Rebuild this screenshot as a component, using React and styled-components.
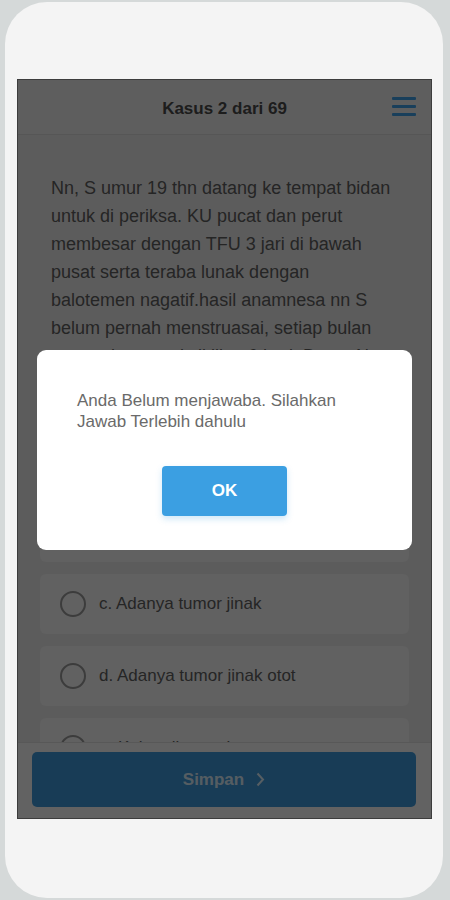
import React from 'react'
import styled, { createGlobalStyle } from 'styled-components'

const GlobalStyle = createGlobalStyle`
  html, body {
    margin: 0;
    padding: 0;
    background: #d5d9d9;
    font-family: "Liberation Sans", Arial, sans-serif;
  }
`;

const Page = styled.div`
  padding: 2px 7px 2px 5px;
`;

const Phone = styled.div`
  width: 438px;
  height: 896px;
  box-sizing: border-box;
  padding: 77px 11px 79px 12px;
  background: #f4f4f4;
  border-radius: 42px;
`;

const Screen = styled.div`
  position: relative;
  width: 415px;
  height: 740px;
  box-sizing: border-box;
  border: 1px solid #3c3c3c;
  background: #e7e7e7;
  display: flex;
  flex-direction: column;
  overflow: hidden;
`;

const Header = styled.div`
  height: 55px;
  flex-shrink: 0;
  box-sizing: border-box;
  padding-top: 4px;
  border-bottom: 1px solid #d6d6d6;
  background: #ececec;
  display: flex;
  align-items: center;
  justify-content: center;
  position: relative;

  h1 {
    margin: 0;
    font-size: 17px;
    font-weight: 700;
    color: #4a4a4a;
  }
`;

const MenuButton = styled.div`
  position: absolute;
  right: 15px;
  top: 17px;
  width: 24px;
  display: flex;
  flex-direction: column;
  gap: 5px;

  span {
    display: block;
    height: 3px;
    background: #3f9fe4;
    border-radius: 1px;
  }
`;

const Content = styled.div`
  flex: 1;
  overflow: hidden;
  padding: 39px 22px 0 22px;
`;

const Question = styled.p`
  margin: 0 0 32px 11px;
  width: 343px;
  font-size: 18px;
  line-height: 28px;
  color: #5c5c5c;
`;

const Options = styled.div`
  display: flex;
  flex-direction: column;
  gap: 12px;
`;

const OptionCard = styled.div`
  height: 60px;
  box-sizing: border-box;
  background: #f2f2f2;
  border-radius: 6px;
  display: flex;
  align-items: center;
  padding-left: 20px;
  gap: 13px;
  font-size: 17px;
  color: #5e5e5e;
`;

const Radio = styled.span`
  width: 26px;
  height: 26px;
  box-sizing: border-box;
  border: 2px solid #969696;
  border-radius: 50%;
  flex-shrink: 0;
`;

const Footer = styled.div`
  height: 76px;
  flex-shrink: 0;
  box-sizing: border-box;
  border-top: 1px solid #dcdcdc;
  background: #f6f6f6;
  padding: 9px 15px 0 14px;
`;

const SaveButton = styled.button`
  width: 100%;
  height: 55px;
  border: none;
  border-radius: 5px;
  background: #3d97d6;
  color: rgba(255, 255, 255, 0.8);
  font-family: "Liberation Sans", Arial, sans-serif;
  font-size: 17px;
  font-weight: 700;
  display: flex;
  align-items: center;
  justify-content: center;
  gap: 12px;
`;

const Backdrop = styled.div`
  position: absolute;
  inset: 0;
  background: rgba(0, 0, 0, 0.6);
  display: flex;
  align-items: center;
  justify-content: center;
`;

const Dialog = styled.div`
  width: 375px;
  height: 200px;
  box-sizing: border-box;
  background: #ffffff;
  border-radius: 9px;
  padding: 40px 40px 0 40px;
  display: flex;
  flex-direction: column;
  margin-top: 1px;

  p {
    margin: 0;
    font-size: 17px;
    line-height: 21px;
    color: #6a6a6a;
  }
`;

const OkButton = styled.button`
  align-self: center;
  margin-top: 34px;
  width: 125px;
  height: 50px;
  border: none;
  border-radius: 4px;
  background: #3b9fe2;
  box-shadow: 0 3px 6px rgba(59, 159, 226, 0.25);
  color: #ffffff;
  font-family: "Liberation Sans", Arial, sans-serif;
  font-size: 17px;
  font-weight: 700;
`;

const options = [
  'a. Hematokolpos',
  'b. Hematometra',
  'c. Adanya tumor jinak',
  'd. Adanya tumor jinak otot',
  'e. Kehamilan mola',
];

const App = () => {
  return (
    <Page>
      <GlobalStyle />
      <Phone>
        <Screen>
          <Header>
            <h1>Kasus 2 dari 69</h1>
            <MenuButton>
              <span />
              <span />
              <span />
            </MenuButton>
          </Header>

          <Content>
            <Question>
              Nn, S umur 19 thn datang ke tempat bidan untuk di periksa. KU pucat dan perut
              membesar dengan TFU 3 jari di bawah pusat serta teraba lunak dengan balotemen
              nagatif.hasil anamnesa nn S belum pernah menstruasai, setiap bulan merasakan
              nyeri siklik ± 6 hari. Dapat Nn S didiagnosa?
            </Question>
            <Options>
              {options.map((o) => (
                <OptionCard key={o}>
                  <Radio />
                  {o}
                </OptionCard>
              ))}
            </Options>
          </Content>

          <Footer>
            <SaveButton>
              Simpan
              <svg width="9" height="15" viewBox="0 0 9 15">
                <path d="M1.5 1.5 L7 7.5 L1.5 13.5" fill="none" stroke="currentColor" strokeWidth="2" />
              </svg>
            </SaveButton>
          </Footer>

          <Backdrop>
            <Dialog>
              <p>Anda Belum menjawaba. Silahkan Jawab Terlebih dahulu</p>
              <OkButton>OK</OkButton>
            </Dialog>
          </Backdrop>
        </Screen>
      </Phone>
    </Page>
  )
}

export default App
